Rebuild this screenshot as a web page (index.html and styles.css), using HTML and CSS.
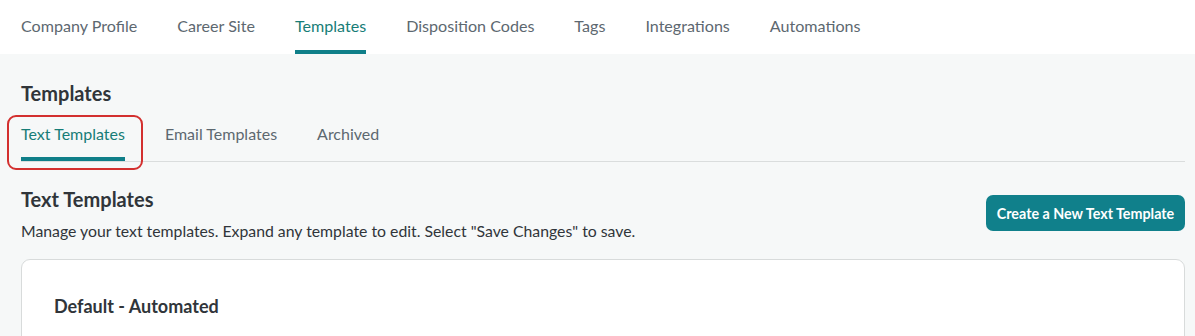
FILE: index.html
```html
<!DOCTYPE html>
<html lang="en">
<head>
<meta charset="utf-8">
<title>Templates</title>
<link rel="stylesheet" href="styles.css">
</head>
<body>
<nav class="topnav">
  <a class="topnav-item">Company Profile</a>
  <a class="topnav-item">Career Site</a>
  <a class="topnav-item is-active">Templates</a>
  <a class="topnav-item">Disposition Codes</a>
  <a class="topnav-item">Tags</a>
  <a class="topnav-item">Integrations</a>
  <a class="topnav-item">Automations</a>
</nav>
<main class="main">
  <h1 class="page-title">Templates</h1>
  <div class="subtabs">
    <a class="subtab is-active is-highlighted">Text Templates</a>
    <a class="subtab">Email Templates</a>
    <a class="subtab">Archived</a>
  </div>
  <div class="section-head">
    <div class="section-text">
      <h2 class="section-title">Text Templates</h2>
      <p class="section-desc">Manage your text templates. Expand any template to edit. Select "Save Changes" to save.</p>
    </div>
    <button class="btn-primary">Create a New Text Template</button>
  </div>
  <div class="card">
    <h3 class="card-title">Default - Automated</h3>
  </div>
</main>
</body>
</html>
```

FILE: styles.css
```css
* { box-sizing: border-box; }
html, body { margin: 0; padding: 0; }
body {
  font-family: Lato, "Open Sans", "Liberation Sans", sans-serif;
  background: #f6f8f8;
  color: #333a3f;
  overflow: hidden;
}
.topnav {
  display: flex;
  gap: 40px;
  padding-left: 21px;
  height: 54px;
  background: #ffffff;
}
.topnav-item {
  display: block;
  font-size: 16.1px;
  line-height: 20px;
  padding-top: 16px;
  color: #5d6870;
  border-bottom: 4px solid transparent;
  cursor: pointer;
}
.topnav-item.is-active {
  color: #177d77;
  border-bottom-color: #0f7f89;
}
.main {
  padding: 27px 10px 0 21px;
}
.page-title {
  margin: 0;
  font-size: 20px;
  line-height: 24px;
  font-weight: 700;
  color: #30353a;
}
.subtabs {
  display: flex;
  gap: 40px;
  border-bottom: 1px solid #dadddd;
}
.subtab {
  position: relative;
  display: block;
  font-size: 16px;
  line-height: 20px;
  padding: 19px 0 13px;
  color: #5d6870;
  border-bottom: 4px solid transparent;
  cursor: pointer;
}
.subtab.is-active {
  color: #177d77;
  border-bottom-color: #0f7f89;
}
.subtab.is-highlighted::after {
  content: "";
  position: absolute;
  left: -14px;
  top: 10px;
  width: 132px;
  height: 51px;
  border: 2px solid #d3302f;
  border-radius: 9px;
}
.section-head {
  display: flex;
  justify-content: space-between;
  align-items: flex-start;
  padding-top: 25px;
}
.section-title {
  margin: 0;
  font-size: 20px;
  line-height: 24px;
  font-weight: 700;
  color: #30353a;
}
.section-desc {
  margin: 10px 0 0;
  font-size: 15.8px;
  line-height: 20px;
  color: #30353a;
}
.btn-primary {
  margin-top: 8px;
  height: 36px;
  width: 199px;
  padding: 0;
  border: none;
  border-radius: 7px;
  background: #10808b;
  color: #ffffff;
  font-family: inherit;
  font-size: 14.3px;
  font-weight: 700;
  cursor: pointer;
}
.card {
  margin-top: 18px;
  background: #ffffff;
  border: 1px solid #d8dbdb;
  border-radius: 9px;
  padding: 35px 32px 40px;
}
.card-title {
  margin: 0;
  font-size: 18px;
  line-height: 22px;
  font-weight: 700;
  color: #30353a;
}
```
